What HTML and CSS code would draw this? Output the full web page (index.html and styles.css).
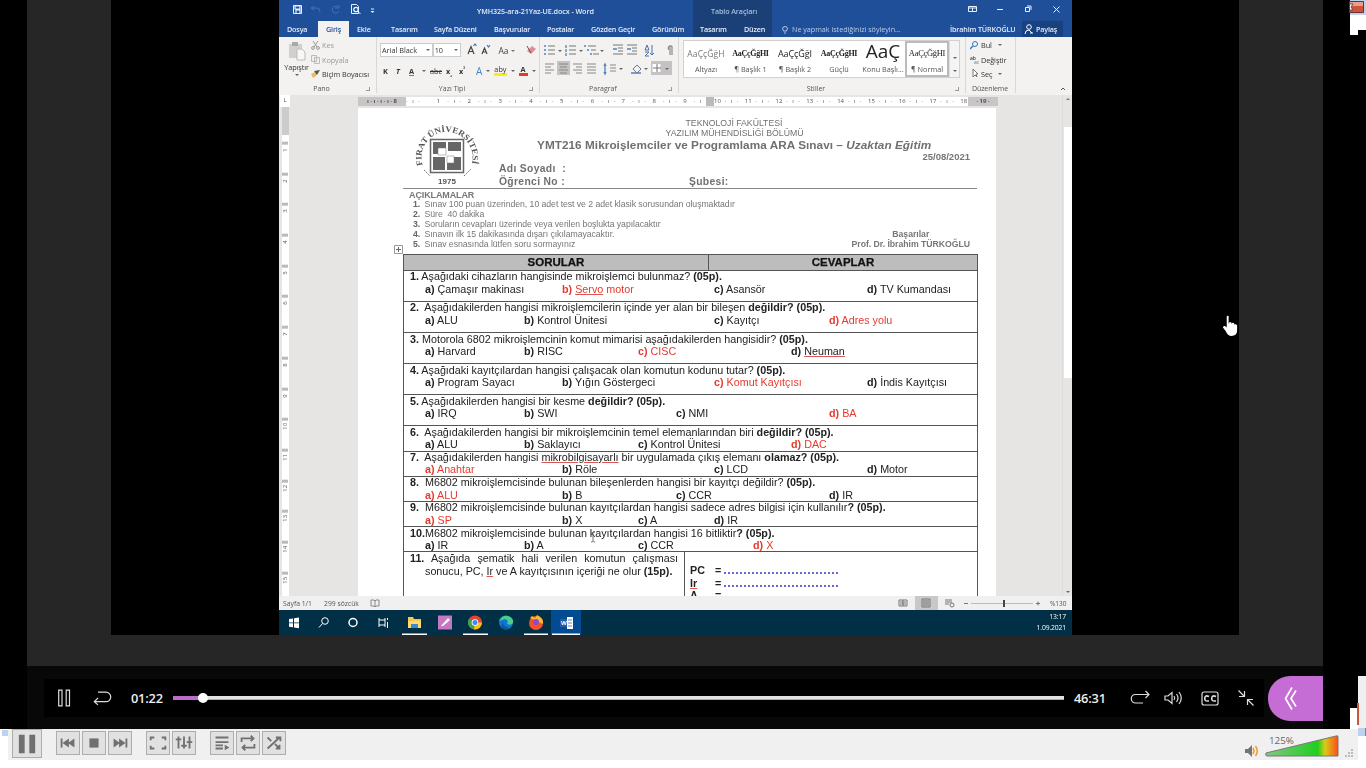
FILE: index.html
```html
<!DOCTYPE html>
<html lang="tr">
<head>
<meta charset="utf-8">
<title>YMH325-ara-21Yaz-UE.docx - Word</title>
<link rel="stylesheet" href="styles.css">
</head>
<body>
<main class="screen">
<section class="player">
<div class="stage"><div class="frame"><div class="video">
<header class="titlebar">
  <div class="quick">
    <svg class="qicons" viewBox="0 0 100 18"><g fill="none" stroke="#e8f0fb"><path d="M14.500 5.500h8v8h-8z"/><path d="M16 6h5v3h-5zM17 13v-3h4v3" stroke-width="1.200"/><path d="M33 8h5q3 0 3 4M35 6l-3 2 3 2M59 7a3.500 3.500 0 1 0 1 4M60 5v3h-4" stroke="#4673b2"/><path d="M72.500 13.500v-9h5l2 2v7z"/><circle cx="77" cy="9.500" r="2.200" stroke-width="1.300"/><path d="M78.500 11l3 3M92 9h3"/></g><path d="M91.500 11h4l-2 2z" fill="#e8f0fb"/></svg>
    <span class="doc-name">YMH325-ara-21Yaz-UE.docx - Word</span>
    <span class="context-name">Tablo Araçları</span>
    <svg class="wicons" viewBox="0 0 130 18"><g fill="none" stroke="#e8f0fb"><path d="M26.500 6.500h8v5h-8zM26 8h9M30.500 8v3M55 9.500h6M83.500 7.500h4v4h-4zM85 6h4v4M111.500 6.500l6 6m0-6l-6 6"/></g></svg>
  </div>
  <nav class="tabs">
    <span>Dosya</span><span class="active">Giriş</span><span>Ekle</span><span>Tasarım</span><span>Sayfa Düzeni</span><span>Başvurular</span><span>Postalar</span><span>Gözden Geçir</span><span>Görünüm</span><span class="ctx">Tasarım</span><span class="ctx">Düzen</span>
    <span class="tell"><svg viewBox="0 0 8 10"><path d="M2.500 7q0-1-1-2a2.500 2.500 0 1 1 5 0q-1 1-1 2zM3 9h2" fill="none" stroke="#d4e1f3" stroke-width=".8"/></svg>Ne yapmak istediğinizi söyleyin...</span>
    <span class="user">İbrahim TÜRKOĞLU</span>
    <span class="share"><svg viewBox="0 0 10 10"><circle cx="5" cy="3" r="2.300" fill="none" stroke="#fff"/><path d="M1 10q0-4 4-4l3 3M6 9h3" fill="none" stroke="#fff"/></svg>Paylaş</span>
  </nav>
</header>
<section class="ribbon">
  <div class="group clip">
    <div class="body">
      <div class="paste"><svg viewBox="0 0 18 20"><path d="M1 3h13v14H1z" fill="#d2cfcf"/><path d="M4 1h6v4H4z" fill="#aaa"/><path d="M9 8h5l3 3v8H9z" fill="#f7f7f7" stroke="#bbb"/></svg>Yapıştır<i class="dn"></i></div>
      <div class="clipcmds"><span class="off"><svg viewBox="0 0 9 9"><path d="M2 0l4 6M7 0L3 6" stroke="#999"/><circle cx="2" cy="7" r="1.400" fill="none" stroke="#999"/><circle cx="7" cy="7" r="1.400" fill="none" stroke="#999"/></svg>Kes</span><span class="off"><svg viewBox="0 0 9 9"><path d="M.5.5h5v6h-5zM3.500 2.500h5v6h-5z" fill="#eee" stroke="#bbb"/></svg>Kopyala</span><span><svg viewBox="0 0 9 9"><path d="M0 5l4-2 2 3-4 3z" fill="#f0b95c"/><path d="M3 2l3 4 3-5" fill="#555"/></svg>Biçim Boyacısı</span></div>
    </div>
    <div class="cap">Pano</div>
  </div>
  <div class="group font">
    <div class="line"><span class="combo face">Arial Black<i class="dn"></i></span><span class="combo size">10<i class="dn"></i></span><svg class="fonttop" viewBox="0 0 78 16"><g fill="none" stroke="#444" stroke-width="1.200"><path d="M7 14l3-7.500 3 7.500M8.500 11.500h3.500M21 14l2.500-6 2.500 6M22 12h3"/><path d="M12.500 6l1.500-2 1.500 2M26 5l1.500 2L29 5" stroke="#3d78c0"/></g><path d="M66 11l5-5 4 3-5 5z" fill="#e8899a"/><path d="M66 6l4 7" stroke="#555"/><path d="M50 10h4l-2 2z" fill="#777"/><text x="37.500" y="13.500" font-size="8.500" fill="#444">Aa</text></svg></div>
    <div class="line marks"><b>K</b><b class="it">T</b><b><u>A</u></b><i class="dn"></i><s>abc</s><b>x<sub>₂</sub></b><b>x<sup>²</sup></b><span class="effect">A</span><i class="dn"></i><span class="hl">aby</span><i class="dn"></i><span class="fc">A</span><i class="dn"></i></div>
    <div class="cap">Yazı Tipi</div>
  </div>
  <div class="group para">
    <svg class="paraicons" viewBox="0 0 142 44"><path d="M17 18h13v14H17zM111 18h21v14h-21z" fill="#c4c2c2"/><path d="M112.500 21h8v8h-8z" fill="#fff"/><g fill="none" stroke="#777"><path d="M8 7h7M8 11h7M8 3h7M29 7h7M29 11h7M29 3h7M51 7h5M53 11h6M48 3h8"/><path d="M73 2h10M78 5h5M78 8h5M73 11h10M87 2h10M92 5h5M92 8h5M87 11h10"/><path d="M5 21h9M5 24h6M5 27h9M5 30h6M19 21h9M20 24h7M19 27h9M20 30h7M33 21h9M36 24h6M33 27h9M36 30h6M47 21h9M47 24h9M47 27h9M47 30h9M70 22h6M70 25h6M70 28h6" stroke="#888"/><path d="M113 25h8M117 21v8M93 26l4-4 4 4-4 4zM132 3h-3q-2 2 0 4M130 3v9M132 3v9"/></g><g stroke="#4f83bd" stroke-width="1.300" fill="none"><path d="M4 3h2M4 7h2M4 11h2M26 2v3M26 6v3M26 10v3M44 3h2M47 7h2M50 11h2M73 6h4M87 6h4M65 22v8M64 23l1-2 1 2M64 29l1 2 1-2M91 30h10"/></g><path d="M107 2l2 5h-4zM105 9h4l-4 4h4M112 2v10l-2-2m2 2l2-2" fill="none" stroke="#4f6fa9"/><path d="M18 7h4l-2 2zM39 7h4l-2 2zM60 7h4l-2 2zM79 25h4l-2 2zM104 25h4l-2 2zM125 25h4l-2 2z" fill="#666"/></svg>
    <div class="cap">Paragraf</div>
  </div>
  <div class="group styles">
    <div class="gallery"><div><p class="s1">AaÇçĞğH</p>Altyazı</div><div><p class="s2">AaÇçĞğHI</p>¶ Başlık 1</div><div><p class="s3">AaÇçĞğI</p>¶ Başlık 2</div><div><p class="s2">AaÇçĞğHI</p>Güçlü</div><div><p class="s5">AaÇ</p>Konu Başlı...</div><div class="sel"><p class="s6">AaÇçĞğHI</p>¶ Normal</div><aside><i></i><i class="dn"></i><i class="dn"></i></aside></div>
    <div class="cap">Stiller</div>
  </div>
  <div class="group edit">
    <div class="cmds"><span><svg viewBox="0 0 9 9"><circle cx="5" cy="3" r="2.500" fill="none" stroke="#3777b8"/><path d="M3 5L0 8" stroke="#3777b8" stroke-width="1.500"/></svg>Bul<i class="dn"></i></span><span><svg viewBox="0 0 9 9"><text x="0" y="5" font-size="5">ab</text><text x="4" y="9" font-size="5" fill="#3777b8">ac</text></svg>Değiştir</span><span><svg viewBox="0 0 9 9"><path d="M3 0v8l2-2 2 2-1-3h2z" fill="#fff" stroke="#777"/></svg>Seç<i class="dn"></i></span></div>
    <div class="cap">Düzenleme</div>
  </div>
  <div class="collapse"><svg viewBox="0 0 6 4"><path d="M1 3l2-2 2 2" fill="none" stroke="#555"/></svg></div>
</section>
<section class="workspace">
  <div class="vruler"><span class="corner">L</span><i class="shade"></i><span>1</span><span>2</span><span>3</span><span>4</span><span>5</span><span>6</span><span>7</span><span>8</span><span>9</span><span>10</span><span>11</span><span>12</span><span>13</span><span>14</span><span>15</span></div>
  <div class="canvas">
    <div class="hruler"><span class="edge">ı · ı · ı · ı · 8</span><span class="nums"><b></b><b>1</b><b>2</b><b>3</b><b>4</b><b>5</b><b>6</b><b>7</b><b>8</b><b>9</b><b class="mark">10</b><b>11</b><b>12</b><b>13</b><b>14</b><b>15</b><b>16</b><b>17</b><b>18</b></span><span class="edge end">· 19 ·</span></div>
    <article class="paper">
      <header class="exam">
        <svg class="logo" viewBox="0 0 72 72"><path id="arc" d="M12 47A25.500 25.500 0 1 1 60 47" fill="none"/><text font-size="8.400" font-weight="700" font-family="Liberation Serif,serif" fill="#555"><textPath href="#arc" startOffset="1" textLength="94" lengthAdjust="spacingAndGlyphs">FIRAT ÜNİVERSİTESİ</textPath></text><path d="M19.500 20.500h33v33h-33z" fill="#fff" stroke="#666" stroke-width="1.500"/><path d="M22 23h13v12H22zM37 23h13v9H37zM22 38h12v13H22zM36 38h14v13H36z" fill="#666"/><path d="M27 29h8v7h-8zM36 37h7v7h-7z" fill="#fff" stroke="#777" stroke-width=".5"/><path d="M13 51l6 6M53 57l7-7" stroke="#777" stroke-dasharray="2 1"/><text x="27" y="65" font-size="8" font-weight="700" fill="#555" textLength="18">1975</text></svg>
        <div class="heading"><p>TEKNOLOJİ FAKÜLTESİ</p><p>YAZILIM MÜHENDİSLİĞİ BÖLÜMÜ</p><h1>YMT216 Mikroişlemciler ve Programlama ARA Sınavı – <em>Uzaktan Eğitim</em></h1><p class="date">25/08/2021</p><div class="student"><span>Adı Soyadı&nbsp; :</span><span></span><span>Öğrenci No :</span><span>Şubesi:</span></div></div>
      </header>
      <section class="notes"><div><h2>AÇIKLAMALAR</h2><ol><li>Sınav 100 puan üzerinden, 10 adet test ve 2 adet klasik sorusundan oluşmaktadır</li><li>Süre&nbsp; 40 dakika</li><li>Soruların cevapları üzerinde veya verilen boşlukta yapılacaktır</li><li>Sınavın ilk 15 dakikasında dışarı çıkılamayacaktır.</li><li>Sınav esnasında lütfen soru sormayınız</li></ol></div><div class="sign"><p>Başarılar</p><p>Prof. Dr. İbrahim TÜRKOĞLU</p></div><svg class="handle" viewBox="0 0 9 9"><path d="M.5.5h8v8h-8z" fill="#fff" stroke="#999"/><path d="M4.500 2v5M2 4.500h5" stroke="#666"/></svg></section>
      <section class="sheet">
        <div class="head"><b>SORULAR</b><b>CEVAPLAR</b></div>
        <div class="q"><p><b>1.</b> Aşağıdaki cihazların hangisinde mikroişlemci bulunmaz? <b>(05p).</b></p><div class="o"><span class="k0"><b>a)</b> Çamaşır makinası</span><span class="k2 red"><b>b)</b> <u>Servo</u> motor</span><span class="k5"><b>c)</b> Asansör</span><span class="k9"><b>d)</b> TV Kumandası</span></div></div>
        <div class="q"><p><b>2.</b>&nbsp; Aşağıdakilerden hangisi mikroişlemcilerin içinde yer alan bir bileşen <b>değildir? (05p).</b></p><div class="o"><span class="k0"><b>a)</b> ALU</span><span class="k1"><b>b)</b> Kontrol Ünitesi</span><span class="k5"><b>c)</b> Kayıtçı</span><span class="k8 red"><b>d)</b> Adres yolu</span></div></div>
        <div class="q"><p><b>3.</b> Motorola 6802 mikroişlemcinin komut mimarisi aşağıdakilerden hangisidir? <b>(05p).</b></p><div class="o"><span class="k0"><b>a)</b> Harvard</span><span class="k1"><b>b)</b> RISC</span><span class="k3 red"><b>c)</b> CISC</span><span class="k7"><b>d)</b> <u>Neuman</u></span></div></div>
        <div class="q"><p><b>4.</b> Aşağıdaki kayıtçılardan hangisi çalışacak olan komutun kodunu tutar? <b>(05p).</b></p><div class="o"><span class="k0"><b>a)</b> Program Sayacı</span><span class="k2"><b>b)</b> Yığın Göstergeci</span><span class="k5 red"><b>c)</b> Komut Kayıtçısı</span><span class="k9"><b>d)</b> İndis Kayıtçısı</span></div></div>
        <div class="q"><p><b>5.</b> Aşağıdakilerden hangisi bir kesme <b>değildir? (05p).</b></p><div class="o"><span class="k0"><b>a)</b> IRQ</span><span class="k1"><b>b)</b> SWI</span><span class="k4"><b>c)</b> NMI</span><span class="k8 red"><b>d)</b> BA</span></div></div>
        <div class="q short"><p><b>6.</b>&nbsp; Aşağıdakilerden hangisi bir mikroişlemcinin temel elemanlarından biri <b>değildir? (05p).</b></p><div class="o"><span class="k0"><b>a)</b> ALU</span><span class="k1"><b>b)</b> Saklayıcı</span><span class="k3"><b>c)</b> Kontrol Ünitesi</span><span class="k7 red"><b>d)</b> DAC</span></div></div>
        <div class="q short"><p><b>7.</b>&nbsp; Aşağıdakilerden hangisi <u>mikrobilgisayarlı</u> bir uygulamada çıkış elemanı <b>olamaz? (05p).</b></p><div class="o"><span class="k0 red"><b>a)</b> Anahtar</span><span class="k2"><b>b)</b> Röle</span><span class="k5"><b>c)</b> LCD</span><span class="k9"><b>d)</b> Motor</span></div></div>
        <div class="q short"><p><b>8.</b>&nbsp; M6802 mikroişlemcisinde bulunan bileşenlerden hangisi bir kayıtçı değildir? <b>(05p).</b></p><div class="o"><span class="k0 red"><b>a)</b> ALU</span><span class="k2"><b>b)</b> B</span><span class="k4"><b>c)</b> CCR</span><span class="k8"><b>d)</b> IR</span></div></div>
        <div class="q short"><p><b>9.</b>&nbsp; M6802 mikroişlemcisinde bulunan kayıtçılardan hangisi sadece adres bilgisi için kullanılır<b>? (05p).</b></p><div class="o"><span class="k0 red"><b>a)</b> SP</span><span class="k2"><b>b)</b> X</span><span class="k3"><b>c)</b> A</span><span class="k5"><b>d)</b> IR</span></div></div>
        <div class="q short"><p><b>10.</b>M6802 mikroişlemcisinde bulunan kayıtçılardan hangisi 16 bitliktir<b>? (05p).</b></p><div class="o"><span class="k0"><b>a)</b> IR</span><span class="k1"><b>b)</b> A</span><span class="k3"><b>c)</b> CCR</span><span class="k6 red"><b>d)</b> X</span></div></div>
        <div class="last"><div class="q11"><p class="just"><b>11.</b> Aşağıda şematik hali verilen komutun çalışması</p><p class="ind">sonucu, PC, <u>Ir</u> ve A kayıtçısının içeriği ne olur <b>(15p).</b></p></div><dl><dt>PC</dt><dd>=</dd><dd class="blank"></dd><dt><u>Ir</u></dt><dd>=</dd><dd class="blank"></dd><dt>A</dt><dd>=</dd></dl></div>
      </section>
    </article>
  </div>
  <div class="vscroll"><i class="up"></i><span></span><i class="dn"></i></div>
</section>
<footer class="status"><span class="pg">Sayfa 1/1</span><span class="wc">299 sözcük</span><svg viewBox="0 0 10 9"><path d="M5 1v7M1 1h3l1 1 1-1h3v6H6L5 8 4 7H1z" fill="none" stroke="#888"/></svg><svg class="views" viewBox="0 0 145 14"><path d="M17 0h23v14H17z" fill="#c9c8c8"/><g fill="none" stroke="#777"><path d="M1 4h8v6H1zM5 4v6M2 6h6M2 8h6M24 3h8v8h-8zM25 5h6M25 7h6M25 9h6M47 4h7M47 6h7M47 8h4"/><circle cx="54" cy="9" r="2"/><path d="M66 7.500h4M138 7.500h4M140 5.500v4"/><path d="M73 7.500h62" stroke="#bbb"/><path d="M106 4v7" stroke="#444" stroke-width="2"/></g></svg><span class="pct">%130</span></footer>
<footer class="taskbar">
  <svg viewBox="0 0 310 25"><path d="M272 0h30v25h-30z" fill="#004b91"/><g fill="#fff"><path d="M10 9l4-.6v4h-4zM15 8.200l5-.7v4.900h-5zM10 13.300h4v4l-4-.6zM15 13.300h5v5l-5-.7zM123 23.500h25v1.500h-25zM184 23.500h25v1.500h-25zM245 23.500h24v1.500h-24zM273 23.500h28v1.500h-28z"/></g><g fill="none" stroke="#fff"><circle cx="46" cy="11" r="3.300"/><path d="M43.500 13.500L40 17.500"/><circle cx="74" cy="12.500" r="4" stroke-width="1.500"/><path d="M100 8v9M106 8v9M100 10h6M100 15h6M108.500 8v2M108.500 12v6"/></g><path d="M129 7h5l1 2h7v9h-13z" fill="#f6c64f"/><path d="M129 11h13v7h-13z" fill="#ffda77"/><path d="M132 14h7v4h-7z" fill="#3490c7"/><path d="M159 5.500h14v14h-14z" fill="#c777bf"/><path d="M162 16l7-8 2 2-7 6z" fill="#fff"/><circle cx="196" cy="12.500" r="7" fill="#e44335"/><path d="M196 12.500l-6-3.500a7 7 0 0 0 5 10.400z" fill="#36a853"/><path d="M196 12.500h7a7 7 0 0 1-8 7z" fill="#fbc30b"/><circle cx="196" cy="12.500" r="3.300" fill="#fff"/><circle cx="196" cy="12.500" r="2.500" fill="#4285f4"/><circle cx="227" cy="12.500" r="7" fill="#0c78cf"/><path d="M220 11q3-6 9-5 6 2 5 7-2 3-6 1 2-4-2-5z" fill="#48ce8b"/><path d="M225 10q-3 6 5 8-4 4-8-1z" fill="#14559f"/><circle cx="257" cy="13" r="7" fill="#f5512b"/><path d="M251 8l2-2 3 2 2-3q7 3 6 9z" fill="#ffb52d"/><circle cx="257" cy="12" r="3" fill="#8b4bcf"/><path d="M281 9h7v8h-7z" fill="#245cae"/><path d="M288 7h6v12h-6z" fill="#fff"/><path d="M289 10h4M289 13h4M289 16h4" stroke="#5e87bd"/><text x="282" y="15" font-size="6" font-weight="700" fill="#fff">W</text></svg>
  <div class="clock">13:17<br>1.09.2021</div>
</footer>
</div></div></div>
<div class="controls"><div class="panel">
  <svg class="left" viewBox="0 0 76 38"><g fill="none" stroke="#ddd" stroke-width="1.200"><path d="M14.700 11.200h3.300v15.600h-3.300zM22.200 11.200h3.300v15.600h-3.300z"/><path d="M54 13.200h8a4.200 4.200 0 0 1 0 9.500H50.500M54 19l-3.700 3.700 3.700 3.200"/></g></svg>
  <span class="time">01:22</span><div class="track"><i></i><b></b></div><span class="time total">46:31</span>
  <svg class="right" viewBox="0 0 150 38"><g fill="none" stroke="#ddd" stroke-width="1.200"><path d="M29 24H21.500a4 4 0 0 1 0-8.500H35M31.500 12l3.500 3.500-3.500 3.500"/><path d="M51 17h3l4-3.500v11l-4-3.500h-3zM60 17q1.500 2 0 4M62.500 15q3 4 0 8M65 13q4.500 6 0 12"/><rect x="88" y="13" width="16" height="13" rx="2"/><path d="M95 17.500q-3-1.500-4 .5-1 4 2 4h2M102 17.500q-3-1.500-4 .5-1 4 2 4h2" stroke-width="1.600"/><path d="M124.500 11.500l6 6M130.500 12v5.500H125M139.500 26.500l-6-6M133.500 26V20.500h5.500"/></g></svg>
</div><div class="expand"><svg viewBox="0 0 55 44"><path d="M24 11.500l-6.500 11 6.500 11M28 14.500l-5 8 5 8" fill="none" stroke="#fff" stroke-width="1.700"/></svg></div></div>
</section>
<footer class="vlc">
  <button class="big"><svg viewBox="0 0 24 24"><path d="M5 4h5v16H5zM14 4h5v16h-5z"/></svg></button>
  <div class="set"><button><svg viewBox="0 0 24 24"><path d="M4 7h2v10H4zM6 12l7-5v10zM12 12l7-5v10z"/></svg></button><button><svg viewBox="0 0 24 24"><path d="M7 7h10v10H7z"/></svg></button><button><svg viewBox="0 0 24 24"><path d="M18 7h2v10h-2zM18 12l-7-5v10zM12 12L5 7v10z"/></svg></button></div>
  <div class="set"><button><svg viewBox="0 0 24 24"><path class="st" d="M4 9V6h4M16 6h4v3M4 15v3h4M16 18h4v-3"/></svg></button><button><svg viewBox="0 0 24 24"><path class="st" d="M6 5v13M12 5v13M18 5v13M3 8h6M9 15h6M15 11h6"/></svg></button></div>
  <div class="set"><button><svg viewBox="0 0 24 24"><path class="st" d="M5 6h14M5 11h14M5 14.500h8M5 18h8"/><path d="M15 14l5 3-5 3z"/></svg></button><button><svg viewBox="0 0 24 24"><path class="st" d="M5 11V7h12M15 4l3 3-3 3M19 13v4H7M9 14l-3 3 3 3"/></svg></button><button><svg viewBox="0 0 24 24"><path class="st" d="M5 18L18 6M14 6h5v4M5 6l4 4M13 13l5 5M18 14v4h-4"/></svg></button></div>
  <svg class="volume" viewBox="0 0 116 31"><path d="M3 20h3l4-4v12l-4-4H3z" fill="#737373"/><path d="M11 19q2 3 0 6M13.500 17q3.500 5 0 10" fill="none" stroke="#f49a28" stroke-width="1.500"/><defs><linearGradient id="vol"><stop stop-color="#83c784"/><stop offset=".72" stop-color="#20ce20"/><stop offset=".82" stop-color="#d8cc17"/><stop offset="1" stop-color="#ff4b18"/></linearGradient></defs><path d="M24 24l70-17q2-1 2 1v19H25q-2 0-1-3z" fill="url(#vol)" stroke="#777"/><text x="27" y="15" font-size="9.800" fill="#666">125%</text><path d="M109 20h2v2h-2zM106 23h2v2h-2zM109 23h2v2h-2zM103 26h2v2h-2zM106 26h2v2h-2zM109 26h2v2h-2z" fill="#bbb"/></svg>
</footer>
<svg class="remnants" viewBox="0 0 1366 768"><path d="M1350 0h16v30h-8v5h-8zM1350 708h8v-32h8v53h-16zM1358 729h8v39h-8z" fill="#fff"/><path d="M1358 676h8v53h-8z" fill="#f0f0f0"/><path d="M1350 0h16v15h-16zM1358 728h7v8h-7zM2 730h6v6H2z" fill="#bdd3ed"/><path d="M1349.500 1.500h14v11h-14z" fill="#d2533c" stroke="#722c2d"/><path d="M1350 2h13v4h-13z" fill="#e5a092"/><path d="M1350 4h3l-2 3 2 3h-3" fill="#fff" stroke="#555"/><path d="M1357 703h2v22h-2z" fill="#c7573e"/><path d="M1365 728h1v8h-1z" fill="#10a9d0"/></svg>
<svg class="pointer" viewBox="0 0 18 24"><path d="M5 2q0-2 2-1v8q1-3 3-1v1q2-2 3 0v1q2-1 3 1v5q0 6-6 6-4 0-6-5l-3-4q1-3 4 0z" fill="#fff"/></svg>
<svg class="caret" viewBox="0 0 6 12"><path d="M1 1q2 0 2 1v8q0 1-2 1M5 1q-2 0-2 1M3 10q0 1 2 1" fill="none" stroke="#777"/></svg>
</main>
</body>
</html>
```
FILE: styles.css
```css
*{box-sizing:border-box}
body,p,h1,h2,ol,dl,dd{margin:0;padding:0}
body{background:#fff;font-family:"Open Sans","Noto Sans",sans-serif}
i,em{font-style:normal}
svg{display:block;flex:none}
.screen{position:relative;width:1366px;height:768px;overflow:hidden;display:flex;flex-direction:column;background:#fff}
.player{height:729px;background:#000;padding:0 43px 0 27px;flex:none}
.stage{height:666px;background:#262626;padding:0 84px 0 84px}
.frame{height:635px;background:#000;padding:0 167px 0 168px;display:flex}
.video{width:793px;height:635px;overflow:hidden;background:#e7e5e4;filter:blur(.35px);flex:none}
.dn{width:0;height:0;border:2px solid transparent;border-top-color:#666;border-bottom:0;display:inline-block;flex:none}
.titlebar{height:37px;background:#1e4f98;color:#e3ecf8}
.quick{height:21px;display:grid;grid-template-columns:198px 216px 249px 130px;font-size:7.2px;font-weight:600;line-height:22px;background:linear-gradient(90deg,transparent 414px,#1b4078 414px,#1b4078 493px,transparent 493px)}
.doc-name{letter-spacing:-.09px}
.qicons{width:100px;height:18px}
.wicons{width:130px;height:18px}
.context-name{padding-left:18px;color:#aabedb;letter-spacing:-.12px}
.tabs{height:16px;display:grid;grid-template-columns:39px 31px 34px 43px 60px 53px 44px 61px 49px 44px 35px 175px 75px 50px;font-size:7.2px;font-weight:600;line-height:16px;white-space:nowrap;letter-spacing:-.16px}
.tabs>span{padding-left:8px}
.tabs .active{background:#f3f2f1;color:#1e4f98;text-align:center;padding:0}
.tabs .ctx{background:#1b4078;padding-left:7px}
.tabs .tell{display:flex;align-items:center;gap:3px;color:#b7cbe6;padding-left:9px;font-weight:400;letter-spacing:-.02px}
.tell svg{width:8px;height:10px}
.tabs .user{padding-left:3px}
.tabs .share{background:#17417f;display:flex;align-items:center;gap:2px;padding-left:2px;width:41px}
.share svg{width:10px;height:10px}
.ribbon{height:58px;background:#f3f2f1;display:grid;grid-template-columns:98px 163px 139px 287px 50px 1fr;font-size:7.3px;color:#333;white-space:nowrap}
.group{border-right:1px solid #d9d8d8;height:56px;display:flex;flex-direction:column}
.cap{margin-top:auto;text-align:center;line-height:9px;height:9px;color:#555;padding-right:12px;font-size:7px;background:linear-gradient(#999,#999) right 6px bottom 2px/4px 1px no-repeat,linear-gradient(#999,#999) right 6px bottom 2px/1px 4px no-repeat}
.body{display:flex}
.paste{width:32px;padding:4px 0 0 3px;display:flex;flex-direction:column;align-items:center;line-height:11px;gap:1px;letter-spacing:-.1px}
.paste svg{width:18px;height:20px}
.clipcmds{padding-top:1px}
.clipcmds span,.cmds span{display:flex;align-items:center;height:14.400px;gap:2px;letter-spacing:-.08px}
.clipcmds svg,.cmds svg{width:9px;height:9px}
.clipcmds .off{color:#999}
.line{display:flex;height:19px;padding:6px 0 0 3px}
.combo{height:14px;background:#fff;border:1px solid #ccc;display:flex;justify-content:space-between;align-items:center;padding:0 2px 0 1px}
.face{width:54px}
.size{width:29px}
.fonttop{width:78px;height:16px;margin-top:-3px}
.marks{align-items:center;padding:7px 0 0 6px;height:22px;gap:4px;color:#333}
.marks b{width:9px}
.marks .it{font-style:italic}
.marks sub,.marks sup{font-size:5px;line-height:0}
.marks .effect{color:#4688c5;font-size:10px;margin-left:4px}
.marks .hl{border-bottom:3px solid #f5ef16;line-height:7px;height:10px}
.marks .fc{border-bottom:3px solid #e23b2c;font-weight:700;line-height:7px;height:10px;width:9px;text-align:center}
.paraicons{width:142px;height:44px;margin-top:6px;margin-bottom:-7px}
.para{overflow:hidden}
.gallery{display:grid;grid-template-columns:44px 45px 44px 44px 44px 44px 10px;height:38px;width:277px;margin:3px 0 0 4px;background:#fff;border:1px solid #d2d0d0}
.gallery div{text-align:center;line-height:10px;color:#555}
.gallery p{height:23px;line-height:25px;color:#222}
.gallery .s1{font-size:8.500px;color:#777;letter-spacing:.1px}
.gallery .s2{font:700 8px/25px "Liberation Serif",serif;letter-spacing:-.3px}
.gallery .s3{font-size:9px;letter-spacing:-.1px}
.gallery .s5{font-size:19px;line-height:21px}
.gallery .s6{font:8.500px/23px "Liberation Serif",serif;letter-spacing:-.3px}
.gallery .sel{outline:2px solid #bbb;outline-offset:-2px;padding-top:1px}
.gallery .sel p{height:22px}
.gallery aside{display:flex;flex-direction:column;justify-content:space-around;align-items:center;border-left:1px solid #ddd;background:#f4f4f4}
.edit{padding-left:4px}
.edit .cap{padding:0 0 0 2px;text-align:left;background:none;letter-spacing:-.1px}
.cmds{padding-top:1px}
.cmds .dn{margin-left:4px}
.collapse{display:flex;align-items:end;justify-content:end;padding:0 6px 4px 0}
.collapse svg{width:6px;height:4px}
.workspace{height:501px;display:grid;grid-template-columns:12px 771px 10px;overflow:hidden}
.vruler{height:501px;overflow:hidden;background:linear-gradient(90deg,#e7e5e4 3px,#fff 3px,#fff 10px,#e7e5e4 10px);display:flex;flex-direction:column;align-items:center;font-size:6px;color:#555}
.vruler span{height:30.700px;flex:none;writing-mode:vertical-rl;transform:rotate(180deg);text-align:center;background:linear-gradient(#bbb,#bbb) center bottom 7px/6px 3px no-repeat}
.vruler .corner{height:12px;background:#fff;writing-mode:initial;transform:none;width:10px;line-height:10px}
.shade{height:28px;width:7px;background:#ccc;flex:none}
.canvas{padding:0 66px 0 67px}
.hruler{height:13px;padding-top:2px;width:640px;display:flex;font-size:6px;line-height:9px;color:#555}
.hruler .edge{width:48px;background:#c7c5c5;text-align:center;height:9px;font-weight:700;white-space:nowrap}
.hruler .nums{width:562px;background:#fff;display:flex;height:9px}
.nums b{width:30.800px;flex:none;font-weight:400;white-space:nowrap;display:flex;justify-content:space-between}
.nums b:after{content:"· ı ·";white-space:pre;letter-spacing:1.500px;padding-right:5px}
.nums .mark{background:linear-gradient(90deg,#bbb 8px,transparent 8px);margin-left:-8px;padding-left:8px;width:38.800px}
.hruler .end{width:30px}
.paper{height:488px;background:#fff;padding:10px 19px 0 45px;overflow:hidden;font-family:"Liberation Sans",Arial,sans-serif;color:#222}
.exam{height:71px;display:grid;grid-template-columns:95px 1fr;border-bottom:1px solid #888;color:#707070}
.logo{width:72px;height:72px;margin:1px 0 0 8px}
.heading{font-size:8.700px;line-height:10px;text-align:center}
.heading p{padding-right:6px}
.heading p:nth-child(1){padding-right:7px}
.heading h1{font-size:11.760px;line-height:13px;white-space:nowrap;text-align:left;padding-left:39px;letter-spacing:.05px}
.heading em{font-style:italic}
.heading .date{text-align:right;padding-right:7px;font-weight:700;font-size:9.500px;line-height:12px;color:#777}
.student{display:grid;grid-template-columns:190px 1fr;font-weight:700;font-size:10.300px;line-height:12.500px;text-align:left;letter-spacing:.35px;padding-left:1px}
.notes{height:65px;display:flex;justify-content:space-between;position:relative;padding:1px 7px 0 6px;font-size:8.700px;line-height:9.900px;color:#777;white-space:nowrap}
.notes h2{font-size:9px;line-height:10px;color:#777;letter-spacing:-.12px}
.notes ol{list-style:none;counter-reset:n}
.notes li{counter-increment:n;padding-left:4px;letter-spacing:-.045px}
.notes li:before{content:counter(n) ".";font-weight:700;display:inline-block;width:11.500px;color:#666}
.sign{align-self:end;text-align:center;font-weight:700;color:#777;padding-bottom:4px;letter-spacing:-.03px}
.handle{position:absolute;left:-9px;bottom:0;width:9px;height:9px}
.sheet{width:575px;border:1px solid #555;border-bottom:0;height:343px;font-size:10.760px;line-height:12.500px;white-space:nowrap}
.head{display:grid;grid-template-columns:304px 1fr;height:15px;background:#bdbdbd;text-align:center;line-height:15px;font-size:11.500px;color:#111;-webkit-text-stroke:.25px #111}
.head b+b{border-left:1px solid #555}
.q{height:31.100px;border-top:1px solid #555;padding:0 0 0 6px}
.q p,.o{margin-top:-.7px;margin-bottom:.7px}
.short{height:25.200px}
.o{display:grid;grid-template-columns:99px 38px 76px 38px 38px 39px 38px 38px 38px 1fr;padding-left:15px}
.o span{grid-row:1;width:0}
.k0{grid-column:1}.k1{grid-column:2}.k2{grid-column:3}.k3{grid-column:4}.k4{grid-column:5}.k5{grid-column:6}.k6{grid-column:7}.k7{grid-column:8}.k8{grid-column:9}.k9{grid-column:10}
.red{color:#e8392d}
u{text-decoration-color:#d55;text-decoration-thickness:1px;text-underline-offset:1px}
.last{height:45px;border-top:1px solid #555;display:grid;grid-template-columns:280px 1fr}
.q11{padding:0 6px 0 6px}
.just{text-align-last:justify;white-space:normal}
.ind{padding-left:15px}
.last dl{border-left:1px solid #555;padding:12px 0 0 5px;display:grid;grid-template-columns:25px 9px 114px;grid-auto-rows:12.500px;font-weight:700}
.last dt:last-of-type{grid-column:1}
.blank{height:10px;border-bottom:2px dotted #6767ce}
.vscroll{border-left:1px solid #ddd;padding:3px 0;display:flex;flex-direction:column;align-items:center}
.vscroll span{width:8px;height:251px;background:#fff;margin:27px 0 auto}
.vscroll .up{border:2px solid transparent;border-bottom-color:#777;border-top:0;height:2px}
.status{height:14px;background:#f1f0f0;display:flex;align-items:center;font-size:6.800px;color:#555;padding-left:4px}
.pg{width:41px}
.wc{width:46px}
.status>svg{width:10px;height:9px}
.status .views{width:145px;height:14px;margin-left:518px}
.pct{margin-left:7px;font-size:6.500px}
.taskbar{height:25px;background:#012f45;display:flex;justify-content:space-between;color:#fff}
.taskbar>svg{width:310px;height:25px}
.clock{font-size:6.800px;line-height:11px;text-align:right;padding:1px 6px 0 0;letter-spacing:-.15px}
.clock::first-line{letter-spacing:-.1px}
.controls{height:63px;background:#080808;padding:10px 0 0 17px;display:flex;gap:4px}
.panel{width:1220px;height:38px;margin-top:3px;background:#000;display:flex;align-items:center;color:#eee}
.left{width:76px;height:38px}
.time{font-size:12.800px;width:53px;padding-left:11px;font-weight:600;letter-spacing:-.2px}
.track{width:891px;height:4px;background:#e3e1e3;display:flex;align-items:center;border-bottom:1px solid #aaa}
.track i{width:25px;height:4px;background:#bd6ccc}
.track b{width:10px;height:10px;border-radius:50%;background:#fff}
.time.total{width:50px;padding-left:10px}
.right{width:150px;height:38px}
.expand{width:55px;height:45px;background:#c66dd5;border-radius:22px 0 0 22px}
.expand svg{width:55px;height:44px}
.vlc{height:31px;background:#f0f0f0;margin:0 8px;padding:0 0 0 4px;display:flex;gap:14px;flex:none}
.vlc button{width:24px;height:24px;margin:2px 0;padding:0;background:#e1e1e1;border:1px solid #adadad}
.vlc button svg{width:22px;height:22px;fill:#707070}
.vlc .st{fill:none;stroke:#707070;stroke-width:2}
.vlc .big{width:30px;height:29px;margin:0}
.vlc .big svg{width:28px;height:28px}
.set{display:flex;gap:2px}
.volume{width:116px;height:31px;margin-left:auto}
.remnants{position:absolute;left:0;top:0;width:1366px;height:768px}
.pointer{position:absolute;left:1222px;top:315px;width:17px;height:23px}
.caret{position:absolute;left:590px;top:531px;width:6px;height:12px}
```
